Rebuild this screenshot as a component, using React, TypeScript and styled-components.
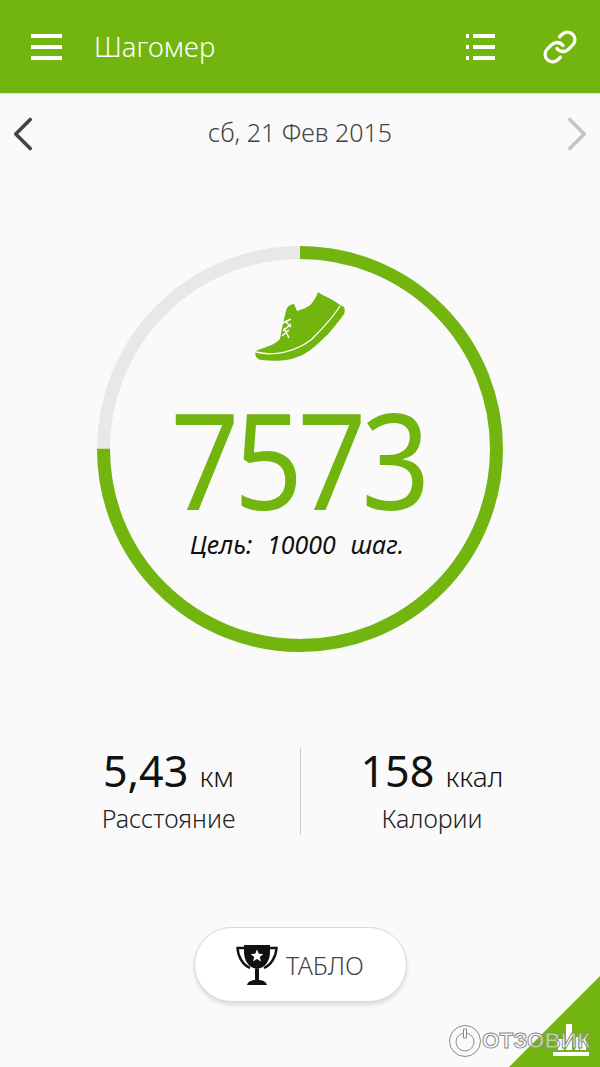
import React from 'react';
import styled, { createGlobalStyle } from 'styled-components';
import { ChevronLeft, ChevronRight, Link as LinkIcon } from 'lucide-react';

const GREEN = '#72b50f';
const STEPS = 7573;
const GOAL = 10000;
const RING_RADIUS = 196.5;
const RING_PROGRESS = 0.75;

const GlobalStyle = createGlobalStyle`
  html, body {
    margin: 0;
    background: #fafafa;
  }
  body {
    font-family: "Noto Sans", "Open Sans", sans-serif;
  }
`;

const App = () => {
  const circumference = 2 * Math.PI * RING_RADIUS;

  return (
    <Screen>
      <GlobalStyle />
      <Header>
        <MenuBars>
          <span />
          <span />
          <span />
        </MenuBars>
        <Title>Шагомер</Title>
        <HeaderActions>
          <ListButton>
            <ListRow />
            <ListRow />
            <ListRow />
          </ListButton>
          <LinkIcon size={36} color="#fff" strokeWidth={2.2} />
        </HeaderActions>
      </Header>

      <DateRow>
        <DateArrow as={ChevronLeft} size={58} color="#444" strokeWidth={1.5} />
        <DateText>сб, 21 Фев 2015</DateText>
        <DateArrow as={ChevronRight} size={58} color="#c4c4c4" strokeWidth={1.5} />
      </DateRow>

      <Ring>
        <RingSvg width="406" height="406" viewBox="0 0 406 406">
          <circle cx="203" cy="203" r={RING_RADIUS} fill="none" stroke="#e8e8e8" strokeWidth="13" />
          <circle
            cx="203"
            cy="203"
            r={RING_RADIUS}
            fill="none"
            stroke={GREEN}
            strokeWidth="13"
            strokeDasharray={`${circumference * RING_PROGRESS} ${circumference}`}
            transform="rotate(-90 203 203)"
          />
        </RingSvg>
        <RingContent>
          <Shoe width="94" height="74" viewBox="24 18 94 74">
            <path
              d="M27 80C36 76 46 74 51 68C53 58 55 46 58 37C60 34 63 33 65 33L68 40C74 38 80 36 83 32C86 28 88 24 89 21C94 25 104 28 111 34L115 36C116 38 116 41 115 43C106 56 94 70 80 80C66 90 48 91 32 89C28 88 25 85 27 80Z"
              fill={GREEN}
            />
            <path d="M27 81C46 86 68 80 83 68C93 58 103 48 111 35" stroke="#fff" strokeWidth="1.3" fill="none" />
            <path d="M54 52L62 48M56 50L62 56M54 60L62 53M55 57L60 67M53 65L60 59" stroke="#fff" strokeWidth="1.5" fill="none" />
          </Shoe>
          <StepCount>{STEPS}</StepCount>
          <Goal>Цель: {GOAL} шаг.</Goal>
        </RingContent>
      </Ring>

      <Stats>
        <Stat>
          <StatValue>
            5,43 <StatUnit>км</StatUnit>
          </StatValue>
          <StatLabel>Расстояние</StatLabel>
        </Stat>
        <Stat>
          <StatValue>
            158 <StatUnit>ккал</StatUnit>
          </StatValue>
          <StatLabel>Калории</StatLabel>
        </Stat>
      </Stats>

      <ButtonRow>
        <BoardButton>
          <svg width="42" height="42" viewBox="0 0 42 42">
            <path d="M8 1H34V8C34 17 29 24 21 25C13 24 8 17 8 8Z" fill="#111" />
            <path
              d="M8 4H1.5C2 13 7 21 14 24M34 4H40.5C40 13 35 21 28 24"
              fill="none"
              stroke="#111"
              strokeWidth="2.4"
            />
            <rect x="19" y="25" width="4" height="12" fill="#111" />
            <path d="M11 41C12 37 16 36 21 36C26 36 30 37 31 41Z" fill="#111" />
            <path
              d="M21 5.5L22.8 9.8L27.3 10.1L23.8 13L25 17.4L21 15L17 17.4L18.2 13L14.7 10.1L19.2 9.8Z"
              fill="#fff"
            />
          </svg>
          ТАБЛО
        </BoardButton>
      </ButtonRow>

      <Corner>
        <svg width="38" height="34" viewBox="0 0 38 34">
          <path d="M1 29H37V33H1ZM14 1H20V27H14ZM6 16H12V27H6ZM23 14H27V27H23ZM28 20L34 14V27H28Z" fill="#fff" />
        </svg>
      </Corner>

      <Watermark>
        <svg width="34" height="34" viewBox="0 0 34 34" fill="none" stroke="#8a8a8a" strokeWidth="1">
          <circle cx="17" cy="17" r="15.5" />
          <circle cx="17" cy="18" r="9" />
          <path d="M15.5 5H18.5V14H15.5Z" fill="#fafafa" />
        </svg>
        <WatermarkText>ОТЗОВИК</WatermarkText>
      </Watermark>
    </Screen>
  );
};

const Screen = styled.div`
  position: relative;
  width: 600px;
  height: 1067px;
  overflow: hidden;
  background: #fafafa;
`;

const Header = styled.header`
  display: flex;
  align-items: center;
  height: 94px;
  padding: 0 22px 0 31px;
  box-sizing: border-box;
  background: ${GREEN};
  border-bottom: 1px solid #d5e8b0;
`;

const MenuBars = styled.div`
  display: flex;
  flex-direction: column;
  gap: 7px;
  width: 31px;
  span {
    height: 4px;
    background: #fff;
  }
`;

const Title = styled.div`
  margin-left: 32px;
  font-size: 27.5px;
  font-weight: 300;
  color: #fff;
`;

const HeaderActions = styled.div`
  display: flex;
  align-items: center;
  gap: 47px;
  margin-left: auto;
`;

const ListButton = styled.div`
  display: flex;
  flex-direction: column;
  gap: 7px;
  width: 29px;
`;

const ListRow = styled.div`
  height: 4px;
  background: linear-gradient(to right, #fff 3px, transparent 3px, transparent 7px, #fff 7px);
`;

const DateRow = styled.div`
  display: flex;
  align-items: center;
  justify-content: space-between;
  height: 79px;
`;

const DateArrow = styled.svg`
  flex: none;
  margin: 0 -6px;
`;

const DateText = styled.div`
  margin-bottom: 4px;
  font-size: 25px;
  font-weight: 300;
  color: #444;
`;

const Ring = styled.div`
  display: grid;
  width: 406px;
  height: 406px;
  margin: 73px auto 0;
`;

const RingSvg = styled.svg`
  grid-area: 1 / 1;
`;

const RingContent = styled.div`
  grid-area: 1 / 1;
  display: flex;
  flex-direction: column;
  align-items: center;
  padding-top: 43px;
`;

const Shoe = styled.svg`
  flex: none;
`;

const StepCount = styled.div`
  margin-top: 43px;
  padding-right: 6px;
  font-size: 134px;
  line-height: 104px;
  letter-spacing: -6px;
  font-weight: 400;
  color: ${GREEN};
  transform: scaleX(0.9);
`;

const Goal = styled.div`
  margin-top: 17px;
  padding-right: 6px;
  font-size: 25px;
  line-height: 34px;
  font-style: italic;
  color: #111;
  word-spacing: 8px;
`;

const Stats = styled.div`
  display: grid;
  grid-template-columns: 1fr 1fr;
  height: 85px;
  margin-top: 96px;
  padding: 0 37px 0 37px;
`;

const Stat = styled.div`
  display: flex;
  flex-direction: column;
  align-items: center;
  & + & {
    border-left: 1px solid #ccc;
  }
`;

const StatValue = styled.div`
  font-size: 43px;
  line-height: 46px;
  color: #111;
`;

const StatUnit = styled.span`
  font-size: 28px;
  line-height: 1;
  font-weight: 300;
`;

const StatLabel = styled.div`
  margin-top: 7px;
  font-size: 25px;
  line-height: 34px;
  font-weight: 300;
  color: #222;
`;

const ButtonRow = styled.div`
  display: flex;
  justify-content: center;
  margin-top: 94px;
`;

const BoardButton = styled.div`
  display: flex;
  align-items: center;
  justify-content: center;
  gap: 8px;
  width: 213px;
  height: 75px;
  box-sizing: border-box;
  border: 1px solid #d8d8d8;
  border-radius: 38px;
  background: #fff;
  box-shadow: 0 3px 4px rgba(0, 0, 0, 0.12);
  font-size: 25px;
  font-weight: 300;
  color: #444;
`;

const Corner = styled.div`
  position: absolute;
  right: 0;
  bottom: 0;
  display: flex;
  align-items: flex-end;
  justify-content: flex-end;
  width: 91px;
  height: 91px;
  padding: 0 10px 10px 0;
  box-sizing: border-box;
  background: ${GREEN};
  clip-path: polygon(100% 0, 100% 100%, 0 100%);
`;

const Watermark = styled.div`
  position: absolute;
  left: 448px;
  bottom: 9px;
  display: flex;
  align-items: center;
`;

const WatermarkText = styled.div`
  font-family: "Liberation Sans", sans-serif;
  font-size: 22.5px;
  font-weight: 700;
  color: rgba(255, 255, 255, 0.5);
  -webkit-text-stroke: 1px #8a8a8a;
`;

export default App;
